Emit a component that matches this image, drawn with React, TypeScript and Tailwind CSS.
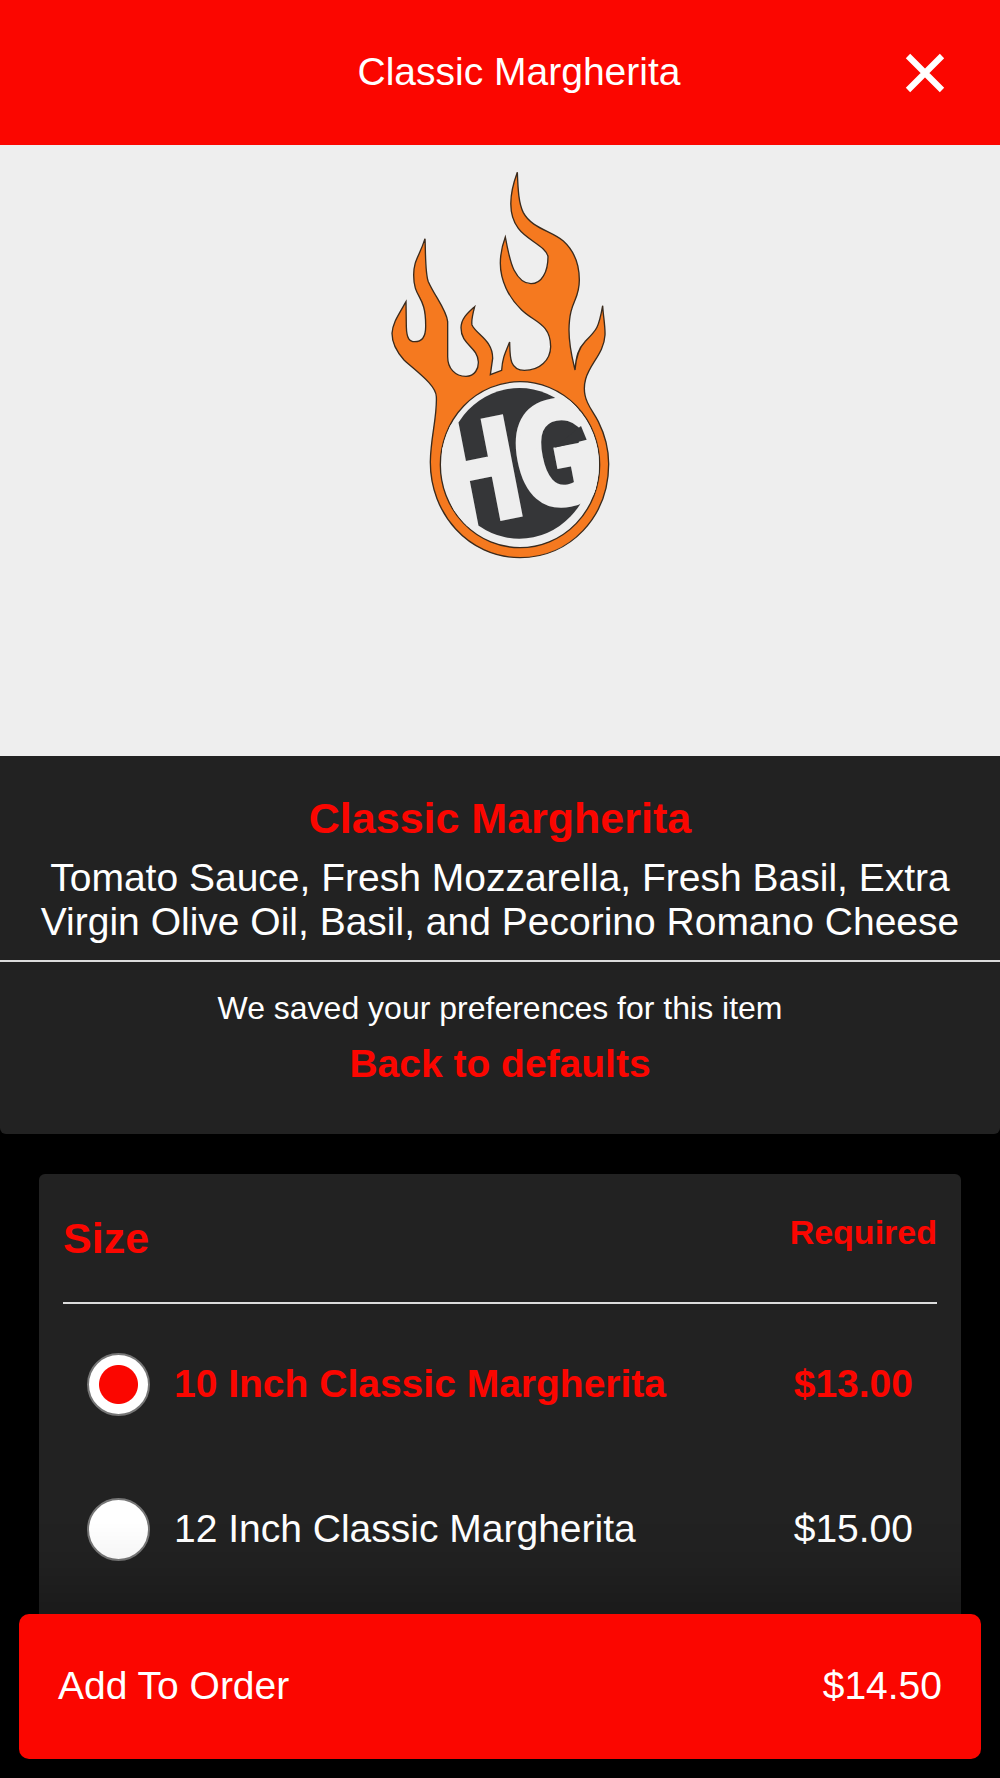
import { useState } from "react";

interface SizeOption {
  id: string;
  name: string;
  price: number;
}

interface SizeRowProps {
  option: SizeOption;
  checked: boolean;
  onSelect: (id: string) => void;
}

const sizes: SizeOption[] = [
  { id: "10-inch", name: "10 Inch Classic Margherita", price: 13 },
  { id: "12-inch", name: "12 Inch Classic Margherita", price: 15 },
];

const formatPrice = (value: number) => `$${value.toFixed(2)}`;

const CloseIcon = () => (
  <svg viewBox="0 0 40 40" className="size-10" aria-hidden="true">
    <path d="M3 3L37 37M37 3L3 37" fill="none" stroke="currentColor" strokeWidth="6.2" />
  </svg>
);

const FlameLogo = () => (
  <svg viewBox="0 0 720 1230" className="h-[410px] w-[240px]" role="img" aria-label="HG">
    <clipPath id="badge">
      <ellipse cx="420" cy="914" rx="237" ry="247" />
    </clipPath>
    <path
      d="M412 37C414 90 416 130 430 158C455 205 515 213 550 243C585 275 598 320 598 360C598 425 568 420 567 510C567 560 578 600 585 630C588 590 595 565 615 545C650 510 656 505 668 437C670 470 676 500 675 525C672 580 630 610 617 657C612 675 612 690 615 705C620 735 640 755 655 785C675 825 686 870 686 912C686 1070 570 1193 420 1193C265 1193 150 1060 151 905C152 830 172 770 169 710C168 675 110 635 72 600C45 570 36 545 36 520C38 490 52 470 78 425L79 500C80 535 88 545 104 545C125 545 137 530 137 500C138 400 101 420 101 345C101 300 118 290 135 236C137 270 135 340 145 365C165 410 200 450 203 485L203 590C203 625 225 649 258 649C285 649 296 625 295 605C293 560 243 555 243 503C244 475 262 460 284 440C280 455 273 480 276 495C290 525 338 540 338 595L331 644L365 631C367 595 375 580 389 546C390 590 388 631 433 631C480 631 511 600 512 560C512 490 460 485 425 450C385 412 361 360 361 310C361 280 367 255 376 231C384 275 392 310 402 330C415 355 430 371 453 371C485 371 504 335 504 290C500 260 440 240 415 205C385 165 385 110 412 37Z"
      fill="#f5791f"
      stroke="#3a2a1c"
      strokeWidth="4"
    />
    <ellipse cx="420" cy="914" rx="239" ry="249" fill="#eee" stroke="#3a2a1c" strokeWidth="4" />
    <ellipse cx="418" cy="910" rx="217" ry="226" fill="#353638" />
    <g clipPath="url(#badge)">
      <g
        fill="#eee"
        stroke="#eee"
        className="font-['DejaVu_Sans_Mono','Liberation_Mono',monospace] font-bold"
      >
        <text transform="translate(204 1109) rotate(-11)" fontSize="418" strokeWidth="8">
          H
        </text>
        <text transform="translate(425 1056) rotate(-11)" fontSize="418" strokeWidth="14">
          G
        </text>
      </g>
      {/* light edge of the badge and the dark notch over it */}
      <path d="M540 727L660 780V990L598 1026L590 925L600 800Z" fill="#eee" />
      <path d="M556 836L603 798L620 839L524 863Z" fill="#353638" />
    </g>
  </svg>
);

const SizeRow = ({ option, checked, onSelect }: SizeRowProps) => (
  <label
    className={`flex h-[145px] cursor-pointer items-center gap-6 px-6 text-[39px] ${
      checked ? "font-bold text-[#fb0600]" : "text-white"
    }`}
  >
    <input
      type="radio"
      name="size"
      value={option.id}
      checked={checked}
      onChange={() => onSelect(option.id)}
      className="size-[63px] shrink-0 appearance-none rounded-full border-2 border-[#767676] bg-white bg-[radial-gradient(circle,#fb0600_19px,transparent_20px)] not-checked:bg-none"
    />
    <span className="flex-1">{option.name}</span>
    <span>{formatPrice(option.price)}</span>
  </label>
);

const App = () => {
  const [selected, setSelected] = useState(sizes[0].id);

  return (
    <div className="min-h-screen bg-black font-['Liberation_Sans',Arial,sans-serif] text-white">
      <header className="flex h-[145px] items-center bg-[#fb0600] pr-9 pl-[152px]">
        <h1 className="flex-1 text-center text-[39px]">Classic Margherita</h1>
        <button type="button" aria-label="Close" className="flex w-[78px] justify-center">
          <CloseIcon />
        </button>
      </header>

      <main className="pb-[145px]">
        <div className="flex h-[611px] items-start justify-center bg-[#eee] pt-[15px]">
          <FlameLogo />
        </div>

        <section className="rounded-b-md bg-[#222] pb-12 text-center">
          <div className="border-b-2 border-[#dcdcdc] px-9 pt-9 pb-4">
            <h2 className="text-[43px] leading-[52px] font-bold text-[#fb0600]">
              Classic Margherita
            </h2>
            <p className="mt-3 text-[39px] leading-[44px]">
              Tomato Sauce, Fresh Mozzarella, Fresh Basil, Extra Virgin Olive Oil, Basil, and
              Pecorino Romano Cheese
            </p>
          </div>
          <p className="mt-6 text-[32px] leading-[44px]">We saved your preferences for this item</p>
          <button
            type="button"
            onClick={() => setSelected(sizes[0].id)}
            className="mt-3 text-[39px] leading-[44px] font-bold text-[#fb0600]"
          >
            Back to defaults
          </button>
        </section>

        <section
          role="radiogroup"
          aria-labelledby="size-heading"
          className="mx-[39px] mt-10 rounded-t-md bg-[#222] px-6 pt-9 pb-4"
        >
          <div className="flex items-start justify-between border-b-2 border-[#dcdcdc] pb-9 font-bold text-[#fb0600]">
            <h2 id="size-heading" className="text-[43px] leading-[56px]">
              Size
            </h2>
            <span className="text-[34px] leading-[44px]">Required</span>
          </div>
          <div className="pt-2">
            {sizes.map((option) => (
              <SizeRow
                key={option.id}
                option={option}
                checked={option.id === selected}
                onSelect={setSelected}
              />
            ))}
          </div>
        </section>
      </main>

      <footer className="pointer-events-none fixed inset-x-0 bottom-0 bg-[linear-gradient(transparent,rgb(0_0_0/0.04)_40px,rgb(0_0_0/0.22)_92px)] px-[19px] pt-[92px] pb-[19px]">
        <button
          type="button"
          className="pointer-events-auto flex h-[145px] w-full items-center justify-between rounded-[10px] bg-[#fb0600] px-[39px] text-[39px]"
        >
          <span>Add To Order</span>
          <span>$14.50</span>
        </button>
      </footer>
    </div>
  );
};

export default App;
